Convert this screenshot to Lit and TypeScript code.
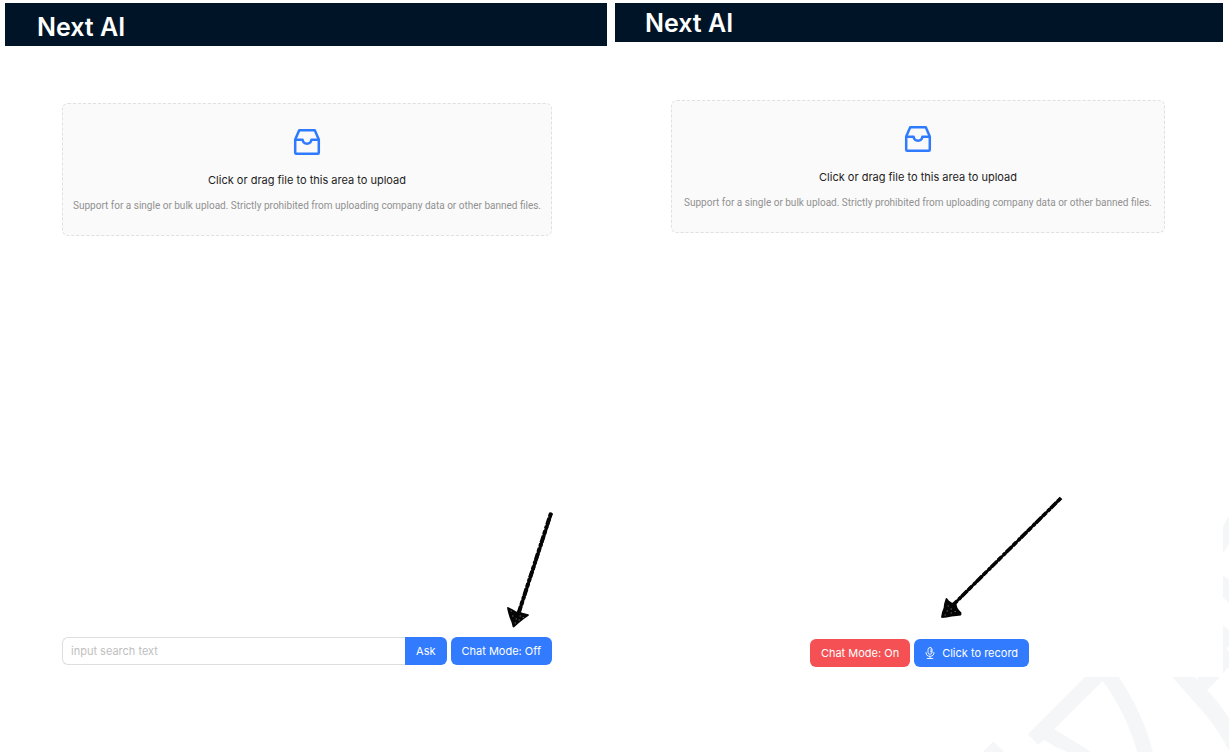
import { LitElement, html, css, svg } from "lit";
import { customElement, property } from "lit/decorators.js";

/* Dashed drop area with an inbox icon */
@customElement("upload-area")
export class UploadArea extends LitElement {
  static styles = css`
    :host {
      display: block;
    }
    .area {
      position: relative;
      box-sizing: border-box;
      display: flex;
      flex-direction: column;
      align-items: center;
      padding: 24px 0 21px;
      border: 1px dashed #e0e0e0;
      border-radius: 6px;
      background: #fafafa;
      text-align: center;
      cursor: pointer;
    }
    .file {
      position: absolute;
      inset: 0;
      width: 100%;
      height: 100%;
      opacity: 0;
      cursor: pointer;
    }
    .icon {
      width: 28px;
      height: 28px;
      margin-bottom: 14px;
    }
    .title {
      font-size: 11px;
      line-height: 20px;
      color: #222222;
      margin-bottom: 8px;
    }
    .hint {
      font-family: Roboto, "Liberation Sans", sans-serif;
      font-size: 10px;
      line-height: 16px;
      color: #919191;
      white-space: nowrap;
    }
  `;

  render() {
    return html`
      <label class="area">
        <input class="file" type="file" multiple />
        <svg class="icon" viewBox="0 0 28 28" fill="none" stroke="#2f7bff" stroke-width="2.5" stroke-linejoin="round" aria-hidden="true">
          <path d="M6.2 2.2h15.6l4 9.3v13.3a1 1 0 0 1-1 1H3.2a1 1 0 0 1-1-1V11.5z" />
          <path d="M2.2 11.7h7.400c.3 2.600 1.900 4 4.400 4s4.100-1.400 4.400-4h7.400" />
        </svg>
        <span class="title">Click or drag file to this area to upload</span>
        <span class="hint">Support for a single or bulk upload. Strictly prohibited from uploading company data or other banned files.</span>
      </label>
    `;
  }
}

/* One application window, with chat mode on or off */
@customElement("chat-panel")
export class ChatPanel extends LitElement {
  @property({ type: Boolean, reflect: true }) on = false;

  static styles = css`
    :host {
      position: relative;
      display: flex;
      flex-direction: column;
      min-width: 0;
      background: #ffffff;
    }
    .header {
      box-sizing: border-box;
      height: 43px;
      padding: 4px 32px 0;
      background: #001427;
      color: #ffffff;
    }
    .name {
      margin: 0;
      font-size: 25px;
      line-height: 40px;
      font-weight: 600;
    }
    .body {
      flex: 1;
      display: flex;
      flex-direction: column;
      justify-content: space-between;
      padding: 57px 55px 12px 57px;
    }
    :host([on]) .header {
      height: 39px;
      padding: 0 30px;
    }
    :host([on]) .body {
      padding: 58px 58px 10px 56px;
    }
    .controls {
      display: flex;
      justify-content: center;
      gap: 4px;
    }
    :host([on]) .controls {
      padding-left: 3px;
    }
    .search {
      flex: 1;
      display: flex;
      min-width: 0;
    }
    .field {
      flex: 1;
      min-width: 0;
      box-sizing: border-box;
      height: 28px;
      padding: 0 8px;
      border: 1px solid #dedede;
      border-right: 0;
      border-radius: 6px 0 0 6px;
      background: #ffffff;
      font: inherit;
      font-size: 11px;
      color: #222222;
      outline: none;
    }
    .field::placeholder {
      color: #c0c0c0;
      opacity: 1;
    }
    .button {
      display: flex;
      align-items: center;
      gap: 7px;
      height: 28px;
      padding: 0 11px;
      border: 0;
      border-radius: 6px;
      background: #327bff;
      color: #ffffff;
      font: inherit;
      font-size: 11px;
      white-space: nowrap;
      cursor: pointer;
    }
    .button.ask {
      border-radius: 0 6px 6px 0;
    }
    .button.danger {
      background: #f55053;
    }
    .mic {
      width: 10px;
      height: 12px;
    }
    .arrow {
      position: absolute;
      pointer-events: none;
    }
    .arrow.steep {
      right: 48px;
      bottom: 44px;
      width: 60px;
      height: 128px;
    }
    .arrow.long {
      right: 153px;
      bottom: 52px;
      width: 140px;
      height: 136px;
    }
  `;

  private arrowOff() {
    return html`
      <svg class="arrow steep" viewBox="0 0 60 128" fill="none" stroke="#050505" stroke-linejoin="round" stroke-linecap="round" aria-hidden="true">
        <path stroke-width="3.200" d="M52 9L19 110" />
        <path stroke-width="4" stroke-dasharray="4 1.500 7 1 3 2" stroke-linecap="butt" d="M52 8L19 110" />
        <path fill="#050505" stroke-width="1.800" d="M9 103l4 2 5 3 5 .5 6 1.500-5 3.500-5 4-4.500 4-1-4-2-5-1.500-5z" />
        <path stroke="#ffffff" stroke-width=".7" opacity=".6" d="M13.500 111h.5M17 114h.5M21 111h.5M24 112.500h.5M16 118h.5M12 106h.5M20 115h.5" />
      </svg>
    `;
  }

  private arrowOn() {
    return html`
      <svg class="arrow long" viewBox="0 0 140 136" fill="none" stroke="#050505" stroke-linejoin="round" stroke-linecap="round" aria-hidden="true">
        <path stroke-width="2.800" d="M130 10L23 116" />
        <path stroke-width="3.600" stroke-dasharray="5 1.500 8 1 3 2.400" stroke-linecap="butt" d="M131 9L23 116" />
        <path fill="#050505" stroke-width="1.800" d="M16.500 110l2 2.500 3 2 4 .5 1 4 2 3 2 2v1.500l-4 .5-5 .5-5 1-4.500.5 1-5 1.500-4 .5-4z" />
        <path stroke="#ffffff" stroke-width=".7" opacity=".6" d="M17 122h.5M21 124h.5M25 122.500h.5M18 117h.5M15 126h.5M21 120h.5" />
      </svg>
    `;
  }

  private controlsOff() {
    return html`
      <div class="controls">
        <form class="search" @submit=${(e: Event) => e.preventDefault()}>
          <input class="field" type="text" aria-label="input search text" placeholder="input search text" />
          <button class="button ask" type="submit">Ask</button>
        </form>
        <button class="button" type="button" @click=${() => (this.on = true)}>Chat Mode: Off</button>
      </div>
    `;
  }

  private controlsOn() {
    return html`
      <div class="controls">
        <button class="button danger" type="button" @click=${() => (this.on = false)}>Chat Mode: On</button>
        <button class="button" type="button">
          <svg class="mic" viewBox="0 0 10 12" fill="none" stroke="#ffffff" stroke-width=".9" stroke-linecap="round" aria-hidden="true">
            <rect x="3" y=".5" width="4" height="6.800" rx="2" />
            <path d="M1 5.500a4 3.800 0 0 0 8 0M5 9.300v2.200M2.200 11.500h5.600M5.500 3h1.500M5.500 4.800h1.500" />
          </svg>
          <span>Click to record</span>
        </button>
      </div>
    `;
  }

  render() {
    return html`
      <header class="header"><h1 class="name">Next AI</h1></header>
      <main class="body">
        <upload-area></upload-area>
        ${this.on ? this.controlsOn() : this.controlsOff()}
      </main>
      ${this.on ? this.arrowOn() : this.arrowOff()}
    `;
  }
}

const watermarkShapes = [
  "M318 528L144 703L174 734L192 720Q230 745 268 758L335 758Q290 728 222 688L368 543Q440 640 472 758L519 758Q490 640 414 528Z",
  "M574 528Q630 590 680 648Q722 702 747 752V655Q720 612 681 571L723 528H660L650 538L640 528Z",
  "M6 758L40 724L74 758Z",
  "M747 48L729 78V160L747 133Z",
  "M729 226L747 240V310L729 292Z",
  "M729 375L747 390V438L738 446L747 455V500L729 520Z",
];

@customElement("app-root")
export class AppRoot extends LitElement {
  static styles = css`
    :host {
      display: block;
      font-family: Inter, "Liberation Sans", sans-serif;
    }
    .page {
      position: relative;
      box-sizing: border-box;
      min-height: 100vh;
      padding: 3px 6px 75px 5px;
      display: grid;
      grid-template-columns: 602fr 608fr;
      gap: 8px;
      background: #ffffff;
      overflow: hidden;
    }
    .watermark {
      position: absolute;
      right: 0;
      bottom: 0;
      width: 249px;
      height: 252px;
      fill: #f5f6f8;
    }
  `;

  render() {
    return html`
      <div class="page">
        <svg class="watermark" viewBox="0 0 747 756" aria-hidden="true">
          ${watermarkShapes.map((d) => svg`<path d=${d} />`)}
        </svg>
        <chat-panel></chat-panel>
        <chat-panel on></chat-panel>
      </div>
    `;
  }
}
